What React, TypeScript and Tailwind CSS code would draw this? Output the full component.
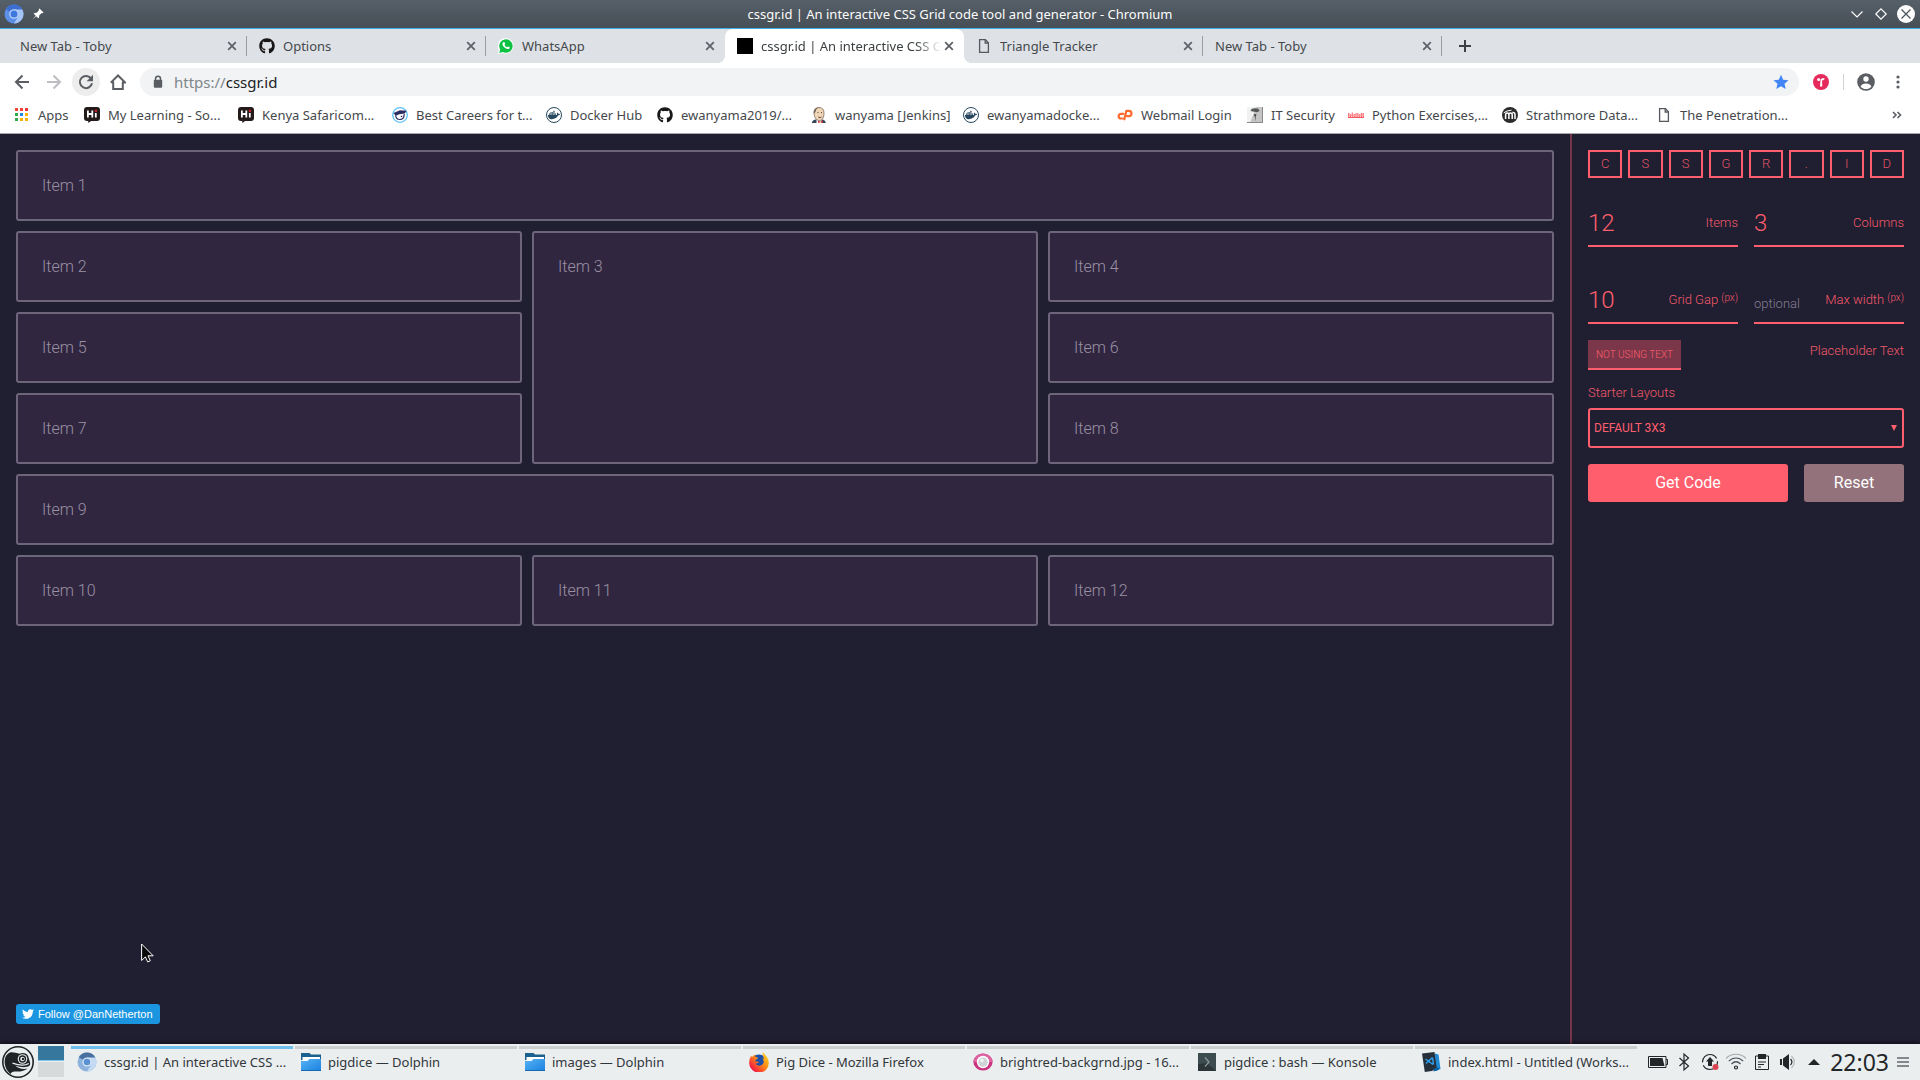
import React from "react";
import { FaGithub, FaDocker, FaTwitter } from "react-icons/fa";

/* ---------- icons ---------- */

function ChromiumIcon({ className }: { className?: string }) {
  return (
    <svg viewBox="0 0 20 20" className={className} aria-hidden="true">
      <circle cx="10" cy="10" r="9.5" fill="#5b8fe8" />
      <path d="M10 10 1.800 5.200A9.500 9.500 0 0 1 18.300 5.400Z" fill="#3c6fd0" />
      <path d="M10 19.500A9.500 9.500 0 0 0 18.300 5.400H10l4.200 7.200Z" fill="#a6c5f7" />
      <circle cx="10" cy="10" r="4.800" fill="#b9d2fa" />
      <circle cx="10" cy="10" r="3.500" fill="#3f78de" />
    </svg>
  );
}

function ChromiumTaskIcon() {
  return (
    <svg viewBox="0 0 20 20" className="size-5" aria-hidden="true">
      <circle cx="10" cy="10" r="9.500" fill="#8db3dc" />
      <path d="M10 10 1.800 5.200A9.500 9.500 0 0 1 18.300 5.400Z" fill="#47709e" />
      <path d="M10 19.500A9.500 9.500 0 0 0 18.300 5.400H10l4.200 7.200Z" fill="#c3daf2" />
      <circle cx="10" cy="10" r="4.600" fill="#dbe9f8" />
      <circle cx="10" cy="10" r="3.300" fill="#5b90d0" />
    </svg>
  );
}

function PinIcon() {
  return (
    <svg viewBox="0 0 12 12" className="size-3" aria-hidden="true">
      <path d="M7.500.5 11.500 4.500 10.700 5.200 9.800 5 7.300 7.300 7 9.500 6.200 10.200 4.200 8.200.5 11.500 3.700 7.700 1.700 5.700 2.500 5 4.700 4.700 7 2.200 6.700 1.200Z" fill="#fff" />
    </svg>
  );
}

function CloseIcon({ className = "size-4" }: { className?: string }) {
  return (
    <svg viewBox="0 0 16 16" className={className} aria-hidden="true">
      <path d="m4.200 4.200 7.600 7.600m0-7.600-7.600 7.600" stroke="#5f6368" strokeWidth="1.800" />
    </svg>
  );
}

function PageIcon() {
  return (
    <svg viewBox="0 0 16 16" className="size-4" aria-hidden="true" fill="none" stroke="#55595d" strokeWidth="1.300">
      <path d="M3.600 1.600h5.800l3 3.200v9.600H3.600Z" />
      <path d="M9.200 1.600v3.400h3.200" />
    </svg>
  );
}

function WhatsAppIcon() {
  return (
    <svg viewBox="0 0 16 16" className="size-4" aria-hidden="true">
      <path d="M0 16 .8 11.700A7.800 7.800 0 1 1 4.500 15Z" fill="#fff" />
      <path d="M1.200 14.900 2.200 11.500A6.700 6.700 0 1 1 4.700 13.900Z" fill="#0dc143" />
      <path d="M5.400 4.300c.5-.4 1-.3 1.200.2l.5 1.200c.1.300 0 .5-.6 1.200.6 1.100 1.400 1.900 2.600 2.400.7-.8.800-.9 1.100-.8l1.400.7c.3.200.2 1.100-.4 1.500-1 .8-2.700.4-4.400-.9-1.600-1.300-2.600-3-2.300-4.300.1-.5.500-.9.900-1.200Z" fill="#fff" />
    </svg>
  );
}

function HiIcon() {
  return (
    <svg viewBox="0 0 16 16" className="size-4" aria-hidden="true">
      <path d="M3 0h10a3 3 0 0 1 3 3v8a3 3 0 0 1-3 3H7l-2.600 2-.2-2H3a3 3 0 0 1-3-3V3a3 3 0 0 1 3-3Z" fill="#231a1a" />
      <path d="M3.900 3.600v6.800M8.300 3.600v6.800M3.900 7h4.400M11.800 6v4.400" stroke="#fff" strokeWidth="1.800" />
      <rect x="10.800" y="2.800" width="2.200" height="2" fill="#e0202a" />
    </svg>
  );
}

function CareersIcon() {
  return (
    <svg viewBox="0 0 16 16" className="size-4" aria-hidden="true">
      <circle cx="8" cy="8" r="7.300" fill="#fff" stroke="#5cc0f5" strokeWidth="1.300" />
      <path d="M1.500 6 8 3.200l6.700.6-2 2.600-5.400.8-3.500 1.600Z" fill="#2e2d62" />
      <path d="M3.600 8.200c.3 3 2 4.300 4.300 4.300 2.500 0 4.300-1.600 4.300-5.500M8.800 9.300h1.400" fill="none" stroke="#2e2d62" strokeWidth="1.200" />
    </svg>
  );
}

function DockerIcon() {
  return (
    <span className="flex size-4 items-center justify-center rounded-full border border-[#27485f] bg-white text-[#27485f]">
      <FaDocker className="size-3" />
    </span>
  );
}

function JenkinsIcon() {
  return (
    <svg viewBox="0 0 16 16" className="size-4" aria-hidden="true">
      <path d="M.8 16c.4-2.400 2-3 4-3.400h6c2.400.2 3.600 1.400 4 3.400Z" fill="#33475a" />
      <path d="M5.500 12h5v4h-5Z" fill="#fff" />
      <path d="M3 5c.2-3 2.200-4.500 5-4.500 3.400 0 5 2.200 5 5.500 0 4.200-1.400 7.500-4.600 7.500C5.300 13.500 3 10.500 3 5Z" fill="#f0d6b7" stroke="#6b5a4a" strokeWidth=".7" />
      <path d="M2.800 6.500C2.300 2.500 4.700.4 8 .4c-2 .8-3.300 2-3.400 4.600Z" fill="#77675a" />
      <path d="M6.500 5.600h1M10 5.600h1M7.300 10c1 .7 2.200.7 3.200 0" stroke="#3a2d27" strokeWidth=".9" fill="none" />
      <path d="m7 13.500 2.300 1.200 2.600-1.200V16l-2.600-.8L7 16Z" fill="#d33833" />
    </svg>
  );
}

function CPanelIcon() {
  return (
    <svg viewBox="0 0 16 16" className="size-4" aria-hidden="true" fill="none" stroke="#ff6c2c" strokeWidth="2.200" strokeLinecap="round" strokeLinejoin="round">
      <path d="M6.300 6.800H4A2.300 2.300 0 0 0 4 11.500h1.500" />
      <path d="M7.300 12.300 9.300 3.900h2.600a2.400 2.400 0 0 1 0 5.200h-2" />
    </svg>
  );
}

function SecurityIcon() {
  return (
    <svg viewBox="0 0 16 16" className="size-4" aria-hidden="true">
      <rect width="16" height="16" fill="#c4c4c4" />
      <path d="M0 0h9L3 16H0Z" fill="#f1f1f1" />
      <path d="M15.500 0v16M0 15.500h16" stroke="#8a8a8a" />
      <path d="M3.500 4c.5-2 2-2.700 4.500-2.700s4 .7 4.500 2.700l-2.500 1.300-4-.8Z" fill="#55585a" />
      <path d="m7 7 2.500.4-1 2.500.6 4.600-1.500-5Z" fill="#3b3b3b" />
    </svg>
  );
}

function PythonExercisesIcon() {
  return (
    <svg viewBox="0 0 16 16" className="size-4" aria-hidden="true">
      <path d="M0 10.500h16" stroke="#f25a60" strokeWidth="1" />
      <path d="M.7 6v4M2.500 7v3M4.300 5.500V10M6.200 7v3M8 6v4M9.900 6v4M11.700 7v3M13.500 6v4M15.200 6v4" stroke="#ff6a70" strokeWidth="1.200" />
      <path d="M1 8.300h14" stroke="#f6a0a4" strokeWidth=".8" />
    </svg>
  );
}

function StrathmoreIcon() {
  return (
    <svg viewBox="0 0 16 16" className="size-4" aria-hidden="true">
      <circle cx="8" cy="8" r="8" fill="#2b2b2b" />
      <path d="M3.600 12V7.600c0-2.200 3.300-2.200 3.300 0V12M6.900 7.600c0-2.200 3.300-2.200 3.300 0V12M13 12V7.500c0-1.600-1-2.400-2.600-2" fill="none" stroke="#fff" strokeWidth="1.500" />
      <path d="M1.800 5.800 5 4l4.500-.8" stroke="#fff" fill="none" />
    </svg>
  );
}

function AppsIcon() {
  const colors = ["#f44336", "#f44336", "#e53935", "#34a853", "#1e88e5", "#fbb300", "#34a853", "#fbb300", "#fbb300"];
  return (
    <svg viewBox="0 0 16 16" className="size-4" aria-hidden="true">
      {colors.map((c, i) => (
        <rect key={i} x={1 + (i % 3) * 5} y={1 + Math.floor(i / 3) * 5} width="3" height="3" fill={c} />
      ))}
    </svg>
  );
}

function LauncherIcon() {
  return (
    <svg viewBox="0 0 32 32" className="size-8" aria-hidden="true">
      <circle cx="16" cy="16" r="15.200" fill="#eceff0" stroke="#1f2426" strokeWidth="1.600" />
      <path d="M3 12.500C4.200 8.500 7 6.200 9.500 6.300c3 .1 5.500 1 8 1.500 2.800-1.600 6.500-1 8 1.200 1.300 2 1.200 4 2.200 6.200.8 2 .7 3.600-.3 4.600-3.200 2.400-9.500 1.500-14.200-.3 2.600 3 8 4.200 12.600 3-3 2.400-8 3.500-12.300 3-2.600-.4-4.500.8-4.700 2.500C4.500 25.500 1.500 18 3 12.500Z" fill="#1f2426" />
      <circle cx="20.500" cy="13" r="4.800" fill="#eceff0" />
      <circle cx="20.500" cy="13" r="3.700" fill="#1f2426" />
      <circle cx="20.500" cy="13" r="2.300" fill="#eceff0" />
      <circle cx="21" cy="13" r="1.200" fill="#1f2426" />
      <path d="M10.500 17.200c5.500 2 12 3 16.300.3" fill="none" stroke="#eceff0" strokeWidth="1.300" />
    </svg>
  );
}

function FolderIcon() {
  return (
    <svg viewBox="0 0 20 20" className="size-5" aria-hidden="true">
      <defs>
        <linearGradient id="folder" x1="0" y1="0" x2="1" y2="1">
          <stop offset="0" stopColor="#57b3f4" />
          <stop offset="1" stopColor="#1a80e0" />
        </linearGradient>
      </defs>
      <path d="M0 1h8.500l1.500 1.500h10V8H0Z" fill="#1c608f" />
      <path d="M1.500 5h17.500v4H1.500Z" fill="#fff" />
      <path d="M0 9h6.500l2-2H20v12H0Z" fill="url(#folder)" />
      <path d="M0 18.500h20" stroke="#1569b4" />
    </svg>
  );
}

function FirefoxIcon() {
  return (
    <svg viewBox="0 0 20 20" className="size-5" aria-hidden="true">
      <defs>
        <linearGradient id="fox" x1="1" y1="0" x2="0" y2="1">
          <stop offset="0" stopColor="#ffe226" />
          <stop offset=".45" stopColor="#ff8a16" />
          <stop offset=".8" stopColor="#f5253f" />
          <stop offset="1" stopColor="#d3127e" />
        </linearGradient>
      </defs>
      <circle cx="10" cy="10.500" r="8" fill="#1c4fa8" />
      <path d="M14 0c1 2.500 5.800 5 5.800 11A9.800 9.300 0 0 1 .2 11.500C.1 8 1.200 4.800 2.500 3.400l.3 2C3.700 3.800 5 2.800 6.600 2.400 6 3.400 6 4 6.300 4.800L9 5.800c-.2 1-1.200 1.600-2.300 2-.5.700 0 1.500-.1 2 1.500-.8 2.500-.2 3.800.3-1.200.4-1.600 1.700-3.700 1.500 1.100 2.200 3.800 2.800 6 1.300C16 10.800 14.700 7.500 13 6.500c.8-.2 1.500 0 2.100.4C14.500 4.500 13 3 14 0Z" fill="url(#fox)" />
    </svg>
  );
}

function ViewerIcon() {
  return (
    <svg viewBox="0 0 20 20" className="size-5" aria-hidden="true">
      <ellipse cx="10" cy="10" rx="9.600" ry="8.600" fill="#c9327f" />
      <path d="M.4 10C.7 5 5 1.400 10 1.400s9.300 3.600 9.600 8.600Z" fill="#df62a0" />
      <ellipse cx="10" cy="10" rx="6.200" ry="6.200" fill="#fff" />
      <circle cx="10" cy="10.300" r="4.700" fill="#d0d3d6" />
      <circle cx="9" cy="8.500" r="1.700" fill="#f2f3f4" />
    </svg>
  );
}

function KonsoleIcon() {
  return (
    <svg viewBox="0 0 20 20" className="size-5" aria-hidden="true">
      <rect x="1" y="1" width="18" height="18" fill="#3d4d4f" />
      <path d="M1 19V12l9-1 9 8Z" fill="#2c3638" />
      <path d="m8 5.500 4 4.500-4 4.500" fill="none" stroke="#8f9b9d" strokeWidth="1.200" />
    </svg>
  );
}

function CodeIcon() {
  return (
    <svg viewBox="0 0 20 20" className="size-5" aria-hidden="true">
      <path d="m14 1.500 3.500 1 2 14.500-5 2Z" fill="#1f8ad6" />
      <path d="M1 1.500 13.500 0l2.300 16.500-5 2.500-7 1Z" fill="#26303a" />
      <path d="m12.500 16.500 6-1-1 2.500-5 1.500Z" fill="#0d5e9e" />
      <path d="m11.500 5.500-6.500 6M4.500 7l7.500 5.500M11.500 5.500l1 7" stroke="#2fa0ee" strokeWidth="1.500" fill="none" />
    </svg>
  );
}

/* ---------- window chrome ---------- */

function TitleBar() {
  return (
    <header className="grid h-[29px] shrink-0 grid-cols-[1fr_auto_1fr] items-center border-b border-[#3daee9] bg-linear-to-b from-[#566068] to-[#464e56]">
      <div className="flex items-center gap-2 pl-1">
        <ChromiumIcon className="size-5" />
        <PinIcon />
      </div>
      <h1 className="text-[13px] leading-5 text-[#fcfcfc]">
        cssgr.id | An interactive CSS Grid code tool and generator - Chromium
      </h1>
      <div className="flex items-center justify-end gap-2 pr-[5px]">
        <button type="button" aria-label="Minimize">
          <svg viewBox="0 0 16 16" className="size-4" fill="none" stroke="#fcfcfc" strokeWidth="1.200">
            <path d="m2.500 5.500 5.500 5.500 5.500-5.500" />
          </svg>
        </button>
        <button type="button" aria-label="Maximize">
          <svg viewBox="0 0 16 16" className="size-4" fill="none" stroke="#fcfcfc" strokeWidth="1.200">
            <path d="m8 2.800 5.200 5.200L8 13.200 2.800 8Z" />
          </svg>
        </button>
        <button type="button" aria-label="Close window">
          <svg viewBox="0 0 18 18" className="size-[18px]">
            <circle cx="9" cy="9" r="9" fill="#fcfcfc" />
            <path d="m4.500 4.500 9 9m0-9-9 9" stroke="#4a5259" strokeWidth="1.200" />
          </svg>
        </button>
      </div>
    </header>
  );
}

type Tab = { title: string; icon?: React.ReactNode; active?: boolean; separator?: boolean };

const tabs: Tab[] = [
  { title: "New Tab - Toby", separator: true },
  { title: "Options", icon: <FaGithub className="size-4 text-[#191717]" />, separator: true },
  { title: "WhatsApp", icon: <WhatsAppIcon /> },
  { title: "cssgr.id | An interactive CSS G", icon: <span className="block size-4 bg-black" />, active: true },
  { title: "Triangle Tracker", icon: <PageIcon />, separator: true },
  { title: "New Tab - Toby", separator: true },
];

function TabStrip() {
  return (
    <div role="tablist" className="flex h-[34px] shrink-0 items-stretch bg-[#dee1e6] pl-2">
      {tabs.map((tab, i) => (
        <div
          key={i}
          className={
            tab.active
              ? "relative flex w-[239px] items-center rounded-t-lg bg-white pl-3 pr-[7px] before:absolute before:-left-2 before:bottom-0 before:size-2 before:bg-[radial-gradient(circle_at_0_0,transparent_8px,#fff_8px)] after:absolute after:-right-2 after:bottom-0 after:size-2 after:bg-[radial-gradient(circle_at_100%_0,transparent_8px,#fff_8px)]"
              : "relative flex w-[239px] items-center pl-3 pr-[7px]"
          }
        >
          {tab.icon && <span className="mr-2 shrink-0">{tab.icon}</span>}
          <button
            type="button"
            role="tab"
            aria-selected={!!tab.active}
            className={
              tab.active
                ? "min-w-0 flex-1 whitespace-nowrap mask-r-from-86% text-left text-[13px] leading-5 text-[#3c4043]"
                : "min-w-0 flex-1 whitespace-nowrap text-left text-[13px] leading-5 text-[#45494d]"
            }
          >
            {tab.title}
          </button>
          <button type="button" aria-label="Close tab" className="shrink-0">
            <CloseIcon />
          </button>
          {tab.separator && <span className="absolute top-[7px] right-0 h-5 w-px bg-[#9a9da1]" />}
        </div>
      ))}
      <button type="button" aria-label="New tab" className="ml-[9px] flex w-7 items-center justify-center">
        <svg viewBox="0 0 12 12" className="size-3">
          <path d="M6 0v12M0 6h12" stroke="#3c4043" strokeWidth="2" />
        </svg>
      </button>
    </div>
  );
}

function Toolbar() {
  return (
    <div className="flex h-[38px] shrink-0 items-center bg-white pl-2 pr-[13px]">
      <button type="button" aria-label="Back" className="flex size-7 items-center justify-center">
        <svg viewBox="0 0 16 16" className="size-4" fill="none" stroke="#5a5e63" strokeWidth="2">
          <path d="M15 8H2.500M8.500 1.500 2 8l6.500 6.500" />
        </svg>
      </button>
      <button type="button" aria-label="Forward" className="ml-1 flex size-7 items-center justify-center">
        <svg viewBox="0 0 16 16" className="size-4" fill="none" stroke="#bcbec1" strokeWidth="2">
          <path d="M1 8h12.500M7.500 1.500 14 8l-6.500 6.500" />
        </svg>
      </button>
      <button type="button" aria-label="Reload" className="ml-1 flex size-7 items-center justify-center rounded-full bg-[#ededee]">
        <svg viewBox="0 0 16 16" className="size-4" fill="none" stroke="#5a5e63" strokeWidth="2">
          <path d="M13.200 4.800A6.100 6.100 0 1 0 14 9.200" />
          <path d="M15 .8v6.400H8.600Z" fill="#5a5e63" stroke="none" />
        </svg>
      </button>
      <button type="button" aria-label="Home" className="ml-1 flex size-7 items-center justify-center">
        <svg viewBox="0 0 16 16" className="size-4" fill="none" stroke="#5a5e63" strokeWidth="2">
          <path d="M3.200 8v7h9.600V8M.8 8.600 8 1.500l7.200 7.100H12" />
          <path d="M1 8.200h3" />
        </svg>
      </button>
      <div className="ml-2 flex h-7 flex-1 items-center rounded-full bg-[#f1f3f4] pl-3 pr-[10px]">
        <svg viewBox="0 0 12 14" className="h-[14px] w-3" aria-hidden="true">
          <path d="M3.500 6V3.700a2.500 2.500 0 0 1 5 0V6" fill="none" stroke="#5a5e63" strokeWidth="1.500" />
          <rect x="1.800" y="4.800" width="8.400" height="8" rx="1" fill="#5a5e63" />
        </svg>
        <label htmlFor="address" className="ml-[10px] pb-px text-[15px] leading-5 text-[#80868b]">
          https://
        </label>
        <input
          id="address"
          defaultValue="cssgr.id"
          className="min-w-0 flex-1 bg-transparent pb-px text-[15px] leading-5 text-[#202124] outline-none"
        />
        <svg viewBox="0 0 16 16" className="size-4" aria-hidden="true">
          <path d="m8 .8 2.200 5 5.300.4-4 3.500 1.200 5.300L8 12.200 3.300 15l1.200-5.300-4-3.500 5.300-.4Z" fill="#4285f4" />
        </svg>
      </div>
      <button type="button" aria-label="Toby" className="ml-[14px]">
        <svg viewBox="0 0 16 16" className="size-4">
          <circle cx="8" cy="8" r="8" fill="#e52b5c" />
          <circle cx="5.600" cy="5.600" r="1.500" fill="#fff" />
          <path d="M7.500 5.800c.8-1.500 2.300-1.800 4.200-1.400-.3 1.300-1.200 2-2.700 2l.3 6H7Z" fill="#fff" />
        </svg>
      </button>
      <span className="ml-[14px] h-4 w-px bg-[#cfd1d4]" />
      <button type="button" aria-label="Profile" className="ml-[13px]">
        <svg viewBox="0 0 18 18" className="size-[18px]">
          <circle cx="9" cy="9" r="8.800" fill="#5a5e63" />
          <circle cx="9" cy="6" r="2.700" fill="#fff" />
          <path d="M3.600 13.400c.6-2 3-3 5.400-3s4.800 1 5.400 3C13 15.200 11 16 9 16s-4-.8-5.400-2.600Z" fill="#fff" />
        </svg>
      </button>
      <button type="button" aria-label="Menu" className="ml-[14px]">
        <svg viewBox="0 0 16 16" className="h-4 w-[18px]" fill="#5a5e63">
          <circle cx="8" cy="3" r="1.600" />
          <circle cx="8" cy="8" r="1.600" />
          <circle cx="8" cy="13" r="1.600" />
        </svg>
      </button>
    </div>
  );
}

const bookmarks: { label: string; icon: React.ReactNode; width: string }[] = [
  { label: "Apps", icon: <AppsIcon />, width: "w-[70px]" },
  { label: "My Learning - So...", icon: <HiIcon />, width: "w-[154px]" },
  { label: "Kenya Safaricom...", icon: <HiIcon />, width: "w-[154px]" },
  { label: "Best Careers for t...", icon: <CareersIcon />, width: "w-[154px]" },
  { label: "Docker Hub", icon: <DockerIcon />, width: "w-[111px]" },
  { label: "ewanyama2019/...", icon: <FaGithub className="size-4 text-[#191717]" />, width: "w-[154px]" },
  { label: "wanyama [Jenkins]", icon: <JenkinsIcon />, width: "w-[152px]" },
  { label: "ewanyamadocke...", icon: <DockerIcon />, width: "w-[154px]" },
  { label: "Webmail Login", icon: <CPanelIcon />, width: "w-[130px]" },
  { label: "IT Security", icon: <SecurityIcon />, width: "w-[101px]" },
  { label: "Python Exercises,...", icon: <PythonExercisesIcon />, width: "w-[154px]" },
  { label: "Strathmore Data...", icon: <StrathmoreIcon />, width: "w-[154px]" },
  { label: "The Penetration...", icon: <PageIcon />, width: "w-[154px]" },
];

function BookmarkBar() {
  return (
    <nav aria-label="Bookmarks" className="flex h-[33px] shrink-0 items-center border-b border-[#a9a8b0] bg-white pb-1 pl-[14px] pr-[18px]">
      {bookmarks.map((b, i) => (
        <a key={i} href="#" className={`flex shrink-0 items-center gap-2 whitespace-nowrap text-[13px] leading-5 text-[#45494d] ${b.width}`}>
          <span className="shrink-0">{b.icon}</span>
          {b.label}
        </a>
      ))}
      <button type="button" aria-label="More bookmarks" className="ml-auto">
        <svg viewBox="0 0 10 8" className="h-2 w-[10px]" fill="none" stroke="#5a5e63" strokeWidth="1.600">
          <path d="m1 1 3 3-3 3M5.500 1l3 3-3 3" />
        </svg>
      </button>
    </nav>
  );
}

/* ---------- page ---------- */

const items = [
  "col-span-3", "", "row-span-3", "", "", "", "", "", "col-span-3", "", "", "",
];

function GridPreview() {
  return (
    <main className="relative flex flex-1 flex-col justify-between p-4 pb-5">
      <div className="grid grid-cols-3 gap-[10px]">
        {items.map((span, i) => (
          <div
            key={i}
            className={`rounded-[3px] border-2 border-[#6d657a] bg-[#312640] px-6 py-[22px] text-base leading-[23px] font-light text-[#9a91a4] ${span}`}
          >
            Item {i + 1}
          </div>
        ))}
      </div>
      <a
        href="#"
        className="flex h-5 items-center gap-1 self-start rounded-[3px] bg-[#1b95e0] px-[6px] pr-[7px] font-['Liberation_Sans',sans-serif] text-[11px] leading-4 text-white"
      >
        <FaTwitter className="size-3" />
        Follow @DanNetherton
      </a>
      <svg viewBox="0 0 13 20" className="absolute left-[141px] top-[809px] h-5 w-[13px]" aria-hidden="true">
        <path d="M.6 1v16.500l3.800-3.600 2.300 5 2.600-1.100L7 12.800h5.200Z" fill="#0a0a0a" stroke="#fff" />
      </svg>
    </main>
  );
}

function Field({ id, label, unit, value }: { id: string; label: string; unit?: boolean; value?: string }) {
  return (
    <div className="flex h-12 items-center border-b-2 border-[#ff5e6c] pt-[2px]">
      <input
        id={id}
        defaultValue={value}
        placeholder="optional"
        className="h-8 w-12 min-w-0 flex-1 bg-transparent text-2xl font-light text-[#ff5e6c] outline-none placeholder:text-[13px] placeholder:text-[#857f92]"
      />
      <label htmlFor={id} className="shrink-0 text-[13px] leading-5 font-light text-[#f05a69]">
        {label}
        {unit && <span className="ml-[3px] inline-block -translate-y-[3px] text-[10px] leading-none">(px)</span>}
      </label>
    </div>
  );
}

function Sidebar() {
  return (
    <aside className="w-[350px] shrink-0 border-l-2 border-[#763649] p-4">
      <div className="grid grid-cols-8 gap-[6px]">
        {"CSSGR.ID".split("").map((c, i) => (
          <span
            key={i}
            className="flex h-7 items-center justify-center border-2 border-[#ff5e6c] text-[13px] font-light text-[#e05565]"
          >
            {c}
          </span>
        ))}
      </div>
      <div className="mt-[21px] grid grid-cols-2 gap-x-4 gap-y-[29px]">
        <Field id="items" label="Items" value="12" />
        <Field id="columns" label="Columns" value="3" />
        <Field id="gap" label="Grid Gap" unit value="10" />
        <Field id="max-width" label="Max width" unit />
      </div>
      <div className="mt-4 flex items-start justify-between">
        <button
          id="placeholder"
          type="button"
          className="h-[30px] border-b-2 border-[#ff5e6c] bg-[#7b3649] px-2 pt-px text-[10px] font-light text-[#ff5e6c]"
        >
          NOT USING TEXT
        </button>
        <label htmlFor="placeholder" className="pt-px text-[13px] leading-5 font-light text-[#f05a69]">
          Placeholder Text
        </label>
      </div>
      <label htmlFor="layout" className="mt-[13px] mb-[5px] block text-[13px] leading-5 font-light text-[#f05a69]">
        Starter Layouts
      </label>
      <div className="relative">
        <select
          id="layout"
          className="block h-10 w-full appearance-none rounded-[3px] border-2 border-[#ff5e6c] bg-[#201e31] px-1 text-xs text-[#ff5e6c] outline-none"
        >
          <option>DEFAULT 3X3</option>
        </select>
        <svg viewBox="0 0 6 6" className="pointer-events-none absolute top-[17px] right-[7px] size-[6px]" aria-hidden="true">
          <path d="M0 0h6L3 6Z" fill="#ff5e6c" />
        </svg>
      </div>
      <div className="mt-4 grid grid-cols-[2fr_1fr] gap-4">
        <button type="button" className="h-[38px] rounded-[3px] bg-[#ff5e6c] text-base text-white">
          Get Code
        </button>
        <button type="button" className="h-[38px] rounded-[3px] bg-[#94727b] text-base text-white">
          Reset
        </button>
      </div>
    </aside>
  );
}

/* ---------- task bar ---------- */

const tasks: { title: string; icon: React.ReactNode; active?: boolean }[] = [
  { title: "cssgr.id | An interactive CSS ...", icon: <ChromiumTaskIcon />, active: true },
  { title: "pigdice — Dolphin", icon: <FolderIcon /> },
  { title: "images — Dolphin", icon: <FolderIcon /> },
  { title: "Pig Dice - Mozilla Firefox", icon: <FirefoxIcon /> },
  { title: "brightred-backgrnd.jpg - 16...", icon: <ViewerIcon /> },
  { title: "pigdice : bash — Konsole", icon: <KonsoleIcon /> },
  { title: "index.html - Untitled (Works...", icon: <CodeIcon /> },
];

function TaskBar() {
  return (
    <footer className="relative flex h-9 shrink-0 items-stretch bg-[#eaeeef] pt-[2px] shadow-[0_-1px_4px_rgba(0,0,0,0.6)]">
      <button type="button" aria-label="Application launcher" className="ml-[2px] self-start">
        <LauncherIcon />
      </button>
      <div className="ml-1 flex w-[26px] flex-col">
        <span className="h-[15px] border-b border-[#7cc4ee] bg-[#36779e]" />
        <span className="mt-px h-[15px] bg-[#d6dada]" />
      </div>
      <div className="ml-[7px] flex min-w-0 flex-1 gap-[2px]">
        {tasks.map((t, i) => (
          <button
            key={i}
            type="button"
            className={
              t.active
                ? "flex w-[222px] items-center gap-[7px] border-t-3 border-[#6ebfec] pb-[5px] pl-[6px] text-left"
                : "flex w-[222px] items-center gap-[7px] border-t-3 border-[#cbcfcf] pb-[5px] pl-[6px] text-left"
            }
          >
            <span className="shrink-0">{t.icon}</span>
            <span className="whitespace-nowrap text-[13px] leading-5 text-[#31363b]">{t.title}</span>
          </button>
        ))}
      </div>
      <div className="flex items-center gap-[6px] pr-[11px] pb-[2px]">
        <svg viewBox="0 0 20 20" className="size-5">
          <path d="M.5 4.500h17.500v11H.500ZM18 7.500h1.500v5H18" fill="none" stroke="#232629" />
          <path d="M2 6h12.500l2 8H2Z" fill="#232629" />
        </svg>
        <svg viewBox="0 0 20 20" className="size-5" fill="none" stroke="#232629" strokeWidth="1.200">
          <path d="m5.500 6 9 8-4.500 4V2l4.500 4-9 8" />
        </svg>
        <svg viewBox="0 0 20 20" className="size-5">
          <circle cx="10" cy="10" r="7.500" fill="none" stroke="#232629" strokeWidth="1.200" strokeDasharray="20 3" />
          <path d="m10 5 4 4.500h-2V14H8V9.500H6Z" fill="#232629" />
          <circle cx="15.500" cy="15" r="3" fill="#da4453" />
        </svg>
        <svg viewBox="0 0 20 20" className="size-5" fill="none" strokeWidth="1.200">
          <path d="M0 6.500C5 .8 15 .8 20 6.500" stroke="#a3a8aa" />
          <path d="M2.800 9.200C7 4.900 13 4.900 17.200 9.200M5.500 12c2.800-2.800 6.200-2.800 9 0" stroke="#4d5356" />
          <circle cx="10" cy="15.500" r="1.500" stroke="#232629" />
        </svg>
        <svg viewBox="0 0 20 20" className="size-5">
          <path d="M3.500 4h13v13.500h-13Z" fill="none" stroke="#232629" />
          <path d="M6 2h8v5H6ZM6 9.500h8v1H6ZM6 12h6v1H6ZM6 14.500h3v1H6Z" fill="#232629" />
        </svg>
        <svg viewBox="0 0 20 20" className="size-5">
          <path d="M2 7h2v6H2ZM5 6.500 11 2v16l-6-4.500Z" fill="#232629" />
          <path d="M12.500 7c1.700 1.800 1.700 4.200 0 6" fill="none" stroke="#232629" strokeWidth="1.200" />
          <path d="M13.500 4c3.700 3.500 3.700 8.500 0 12" fill="none" stroke="#b4b9bb" strokeWidth="1.200" />
        </svg>
        <svg viewBox="0 0 20 20" className="size-5">
          <path d="M4 13h12l-6-6Z" fill="#232629" />
        </svg>
        <time className="text-[23px] leading-8 text-[#232629]">22:03</time>
        <button type="button" aria-label="Panel menu" className="ml-[2px]">
          <svg viewBox="0 0 12 12" className="size-3" stroke="#85898b" strokeWidth="2">
            <path d="M0 2h12M0 6h12M0 10h12" />
          </svg>
        </button>
      </div>
    </footer>
  );
}

export default function App() {
  return (
    <div className="flex min-h-screen flex-col overflow-x-hidden bg-[#201e31] font-['Noto_Sans',sans-serif]">
      <TitleBar />
      <TabStrip />
      <Toolbar />
      <BookmarkBar />
      <div className="flex flex-1 font-[Roboto,sans-serif]">
        <GridPreview />
        <Sidebar />
      </div>
      <TaskBar />
    </div>
  );
}
